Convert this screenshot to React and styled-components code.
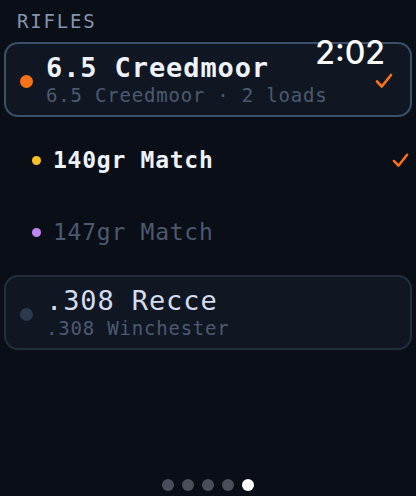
import React from "react";
import styled, { createGlobalStyle } from "styled-components";

const Global = createGlobalStyle`
  html, body {
    margin: 0;
    padding: 0;
    background: #0a0e16;
  }
  body {
    width: 416px;
    height: 496px;
    overflow: hidden;
    font-family: "DejaVu Sans Mono", "Liberation Mono", monospace;
  }
`;

const rifles = [
  {
    id: "65cm",
    name: "6.5 Creedmoor",
    sub: "6.5 Creedmoor · 2 loads",
    color: "#f97316",
    active: true,
    loads: [
      { id: "140", name: "140gr Match", color: "#fbbf24", active: true },
      { id: "147", name: "147gr Match", color: "#c084fc", active: false },
    ],
  },
  {
    id: "308",
    name: ".308 Recce",
    sub: ".308 Winchester",
    color: "#2b394d",
    active: false,
    loads: [],
  },
];

const Check = ({ size = 18 }) => (
  <svg width={size} height={size} viewBox="0 0 18 18" fill="none">
    <path
      d="M2 9.5 L6.8 14.5 L16 3"
      stroke="#f97316"
      strokeWidth="2.6"
      strokeLinecap="round"
      strokeLinejoin="round"
    />
  </svg>
);

export default function App() {
  return (
    <>
      <Global />
      <Screen>
        <Clock>2:02</Clock>
        <Header>RIFLES</Header>
        <List>
          {rifles.map((r) => (
            <React.Fragment key={r.id}>
              <Card $active={r.active}>
                <Dot $color={r.color} />
                <CardText>
                  <Title $active={r.active}>{r.name}</Title>
                  <Sub>{r.sub}</Sub>
                </CardText>
                {r.active && (
                  <CheckWrap>
                    <Check />
                  </CheckWrap>
                )}
              </Card>
              {r.loads.map((l) => (
                <LoadRow key={l.id}>
                  <SmallDot $color={l.color} />
                  <LoadName $active={l.active}>{l.name}</LoadName>
                  {l.active && <Check size={17} />}
                </LoadRow>
              ))}
            </React.Fragment>
          ))}
        </List>
        <Pager>
          {[0, 1, 2, 3, 4].map((i) => (
            <PageDot key={i} $on={i === 4} />
          ))}
        </Pager>
      </Screen>
    </>
  );
}

const Screen = styled.div`
  position: relative;
  height: 496px;
  display: flex;
  flex-direction: column;
  padding: 0 4px;
  box-sizing: border-box;
`;

const Clock = styled.div`
  position: absolute;
  top: 34px;
  right: 31px;
  font-family: Inter, "Noto Sans", sans-serif;
  font-size: 32px;
  font-weight: 500;
  color: #ffffff;
  line-height: 38px;
  z-index: 2;
`;

const Header = styled.div`
  padding: 9px 0 0 13px;
  height: 42px;
  box-sizing: border-box;
  font-size: 19px;
  line-height: 24px;
  letter-spacing: 1.8px;
  color: #8594ad;
`;

const List = styled.div`
  display: flex;
  flex-direction: column;
  gap: 14px;
`;

const Card = styled.div`
  display: flex;
  align-items: center;
  height: 75px;
  box-sizing: border-box;
  padding: 0 17px 0 14px;
  border-radius: 14px;
  background: #101723;
  border: 2px solid ${(p) => (p.$active ? "#3a506a" : "#222e3e")};
`;

const Dot = styled.span`
  width: 13px;
  height: 13px;
  border-radius: 50%;
  background: ${(p) => p.$color};
  flex-shrink: 0;
  margin-top: 3px;
`;

const CardText = styled.div`
  display: flex;
  flex-direction: column;
  margin-left: 13px;
  flex: 1;
`;

const Title = styled.div`
  font-size: 27px;
  line-height: 30px;
  letter-spacing: 0.9px;
  font-weight: ${(p) => (p.$active ? 700 : 400)};
  color: ${(p) => (p.$active ? "#eef2fa" : "#d4ddee")};
`;

const Sub = styled.div`
  font-size: 19px;
  line-height: 24px;
  letter-spacing: 0.8px;
  color: #4b5a70;
`;

const CheckWrap = styled.div`
  display: flex;
  margin-top: 2px;
`;

const LoadRow = styled.div`
  display: flex;
  align-items: center;
  height: 58px;
  padding: 0 3px 0 28px;
`;

const SmallDot = styled.span`
  width: 9px;
  height: 9px;
  border-radius: 50%;
  background: ${(p) => p.$color};
  flex-shrink: 0;
`;

const LoadName = styled.div`
  flex: 1;
  margin-left: 12px;
  font-size: 23px;
  line-height: 28px;
  letter-spacing: 0.75px;
  font-weight: ${(p) => (p.$active ? 700 : 400)};
  color: ${(p) => (p.$active ? "#eef2fa" : "#4b5a70")};
`;

const Pager = styled.div`
  margin-top: auto;
  display: flex;
  justify-content: center;
  gap: 8px;
  padding-bottom: 5px;
`;

const PageDot = styled.span`
  width: 12px;
  height: 12px;
  border-radius: 50%;
  background: ${(p) => (p.$on ? "#ffffff" : "#4a4e5a")};
`;
